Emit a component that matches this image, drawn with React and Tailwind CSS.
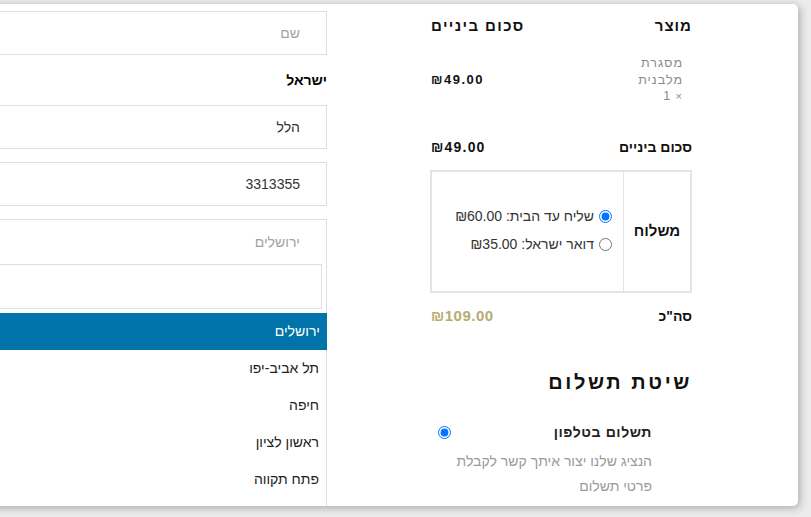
import React from "react";

const cities = ["ירושלים", "תל אביב-יפו", "חיפה", "ראשון לציון", "פתח תקווה"];

function Field({ value, placeholder }) {
  return (
    <div className="h-[44px] border border-[#dedede] flex items-center pr-[26px] text-[14px]">
      {value ? (
        <span className="text-[#333]">{value}</span>
      ) : (
        <span className="text-[#a3a3a3]">{placeholder}</span>
      )}
    </div>
  );
}

function BillingForm() {
  return (
    <div className="flex-1 mr-[103px] pt-[7px] flex flex-col">
      <Field placeholder="שם" />
      <div className="h-[50px] flex items-center text-[14px] font-bold text-black">ישראל</div>
      <Field value="הלל" />
      <div className="h-[13px]" />
      <Field value="3313355" />
      <div className="h-[13px]" />
      <div className="border-x border-t border-[#dedede] h-[45px] flex items-center pr-[26px] text-[14px] text-[#a3a3a3]">
        ירושלים
      </div>
      <div className="flex-1 border-x border-[#dedede]">
        <div className="pr-[4px] pb-[4px]">
          <div className="h-[45px] border border-[#dedede] bg-white" />
        </div>
        {cities.map((city, i) => (
          <div
            key={city}
            className={
              i === 0
                ? "h-[37px] flex items-center pr-[7px] text-[14px] bg-[#0073aa] text-white -mr-px"
                : "h-[37px] flex items-center pr-[7px] text-[14px] text-[#222]"
            }>
            {city}
          </div>
        ))}
      </div>
    </div>
  );
}

function OrderSummary() {
  return (
    <div className="w-[262px] shrink-0 mr-[106px] flex flex-col">
      <div className="h-[44px] grid grid-cols-[68px_1fr] items-center font-bold text-[15px] tracking-[1px] text-[#111]">
        <span>מוצר</span>
        <span className="text-left pl-[1px] tracking-[1.4px]">סכום ביניים</span>
      </div>
      <div className="h-[64px] grid grid-cols-[68px_1fr] items-center">
        <span className="pr-[9px] text-[12.5px] leading-[16.5px] text-[#8a8a8a] tracking-[1px]">
          מסגרת
          <br />
          מלבנית
          <br />
          <span className="text-[11px]">×</span> 1
        </span>
        <span className="text-left pl-[1px] font-bold text-[13px] tracking-[1.5px] text-[#111]">₪49.00</span>
      </div>
      <div className="h-[58px] pt-[12px] grid grid-cols-[68px_1fr] items-center font-bold text-[14px] text-[#111]">
        <span className="whitespace-nowrap">סכום ביניים</span>
        <span className="text-left pl-[1px] text-[14px] tracking-[1.2px]">₪49.00</span>
      </div>
      <div className="h-[123px] border-2 border-[#e4e4e4] grid grid-cols-[67px_1fr]">
        <div className="flex items-center justify-center border-l border-[#e4e4e4] font-bold text-[15px] text-[#111]">
          משלוח
        </div>
        <div className="flex flex-col justify-center gap-[12px] pr-[11px] pb-[3px] text-[14px] text-[#333]">
          <label className="flex items-center gap-[5px] h-[16px]">
            <input type="radio" name="ship" defaultChecked className="m-0 w-[13px] h-[13px]" />
            <span>שליח עד הבית: ₪60.00</span>
          </label>
          <label className="flex items-center gap-[5px] h-[16px]">
            <input type="radio" name="ship" className="m-0 w-[13px] h-[13px]" />
            <span>דואר ישראל: ₪35.00</span>
          </label>
        </div>
      </div>
      <div className="h-[47px] flex items-center justify-between font-bold text-[14px] text-[#111]">
        <span>סה"כ</span>
        <span className="pl-[1px] text-[15px] text-[#b7ab70] tracking-[0.5px]">₪109.00</span>
      </div>
      <div className="h-[78px] pt-[6px] flex items-center font-bold text-[20px] tracking-[2.6px] text-[#111]">
        שיטת תשלום
      </div>
      <div className="h-[28px] flex items-center justify-between pr-[40px] pl-[8px]">
        <span className="text-[14px] font-bold tracking-[0.6px] text-[#222]">תשלום בטלפון</span>
        <input type="radio" name="pay" defaultChecked className="m-0 w-[13px] h-[13px]" />
      </div>
      <p className="mt-[3px] pr-[40px] text-[14px] leading-[25px] text-[#9a9a9a]">
        הנציג שלנו יצור איתך קשר לקבלת
        <br />
        פרטי תשלום
      </p>
    </div>
  );
}

export default function App() {
  return (
    <div
      className="w-[811px] h-[517px] bg-[#ececec] overflow-hidden pt-[4px]"
      style={{ fontFamily: '"Liberation Sans", Arial, sans-serif' }}>
      <div
        dir="rtl"
        className="ml-[-20px] w-[818px] h-[502px] bg-white rounded-[5px] shadow-[2px_2px_8px_rgba(0,0,0,0.28)] overflow-hidden flex">
        <OrderSummary />
        <BillingForm />
      </div>
    </div>
  );
}
